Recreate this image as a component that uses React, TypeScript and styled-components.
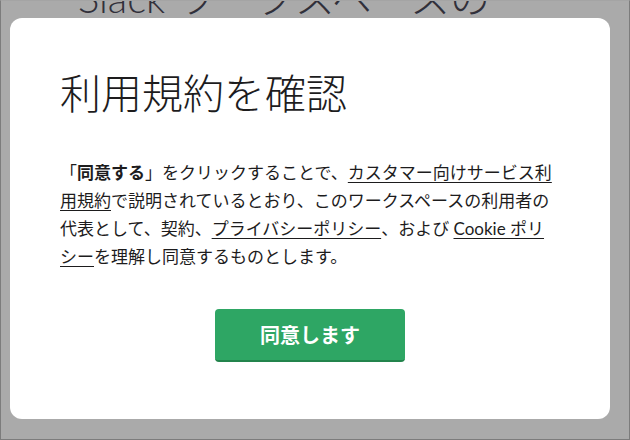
import styled, { createGlobalStyle } from 'styled-components';

const GlobalStyle = createGlobalStyle`
  html, body {
    margin: 0;
    padding: 0;
    width: 630px;
    height: 440px;
    overflow: hidden;
    background: #ffffff;
  }
  * {
    box-sizing: border-box;
  }
`;

const Page = styled.div`
  width: 630px;
  height: 440px;
  overflow: hidden;
  padding: 0 78px;
  font-family: Lato, "Noto Sans CJK JP", sans-serif;
`;

const PageHeading = styled.h1`
  margin: -26px 0 0;
  font-size: 40px;
  font-weight: 300;
  line-height: 1.2;
  color: #4a4858;
  white-space: nowrap;
`;

const Backdrop = styled.div`
  position: fixed;
  inset: 0;
  background: rgba(0, 0, 0, 0.333);
  border: 1px solid #7c7c7c;
  border-top-color: #a4a4a4;
  display: flex;
  justify-content: flex-start;
  align-items: flex-start;
  padding: 17px 0 0 9px;
`;

const Modal = styled.div`
  width: 600px;
  height: 401px;
  background: #ffffff;
  border-radius: 12px;
  padding: 50px 50px 0;
  display: flex;
  flex-direction: column;
  font-family: Lato, "Noto Sans CJK JP", sans-serif;
  color: #1d1c1d;
`;

const Title = styled.h2`
  margin: 0 0 45px;
  font-family: "Noto Sans CJK JP", sans-serif;
  font-size: 41px;
  font-weight: 300;
  line-height: 46px;
  color: #1d1c1d;
`;

const Body = styled.p`
  margin: 0;
  font-size: 17px;
  line-height: 28px;
  color: #1d1c1d;
`;

const Strong = styled.b`
  font-weight: 700;
`;

const Link = styled.a`
  color: inherit;
  text-decoration: underline;
  text-underline-offset: 3px;
  text-decoration-thickness: 1px;
  cursor: pointer;
`;

const Actions = styled.div`
  display: flex;
  justify-content: center;
  margin-top: 38px;
`;

const AgreeButton = styled.button`
  width: 190px;
  height: 53px;
  border: none;
  border-bottom: 2px solid #23844c;
  border-radius: 4px;
  background: #2ea664;
  color: #ffffff;
  font-family: Lato, "Noto Sans CJK JP", sans-serif;
  font-size: 20px;
  font-weight: 700;
  cursor: pointer;
`;

export default function App() {
  return (
    <>
      <GlobalStyle />
      <Page>
        <PageHeading>Slack ワークスペースの</PageHeading>
      </Page>
      <Backdrop>
        <Modal>
          <Title>利用規約を確認</Title>
          <Body>
            「<Strong>同意する</Strong>」をクリックすることで、
            <Link>カスタマー向けサービス利用規約</Link>で説明されているとおり、このワークスペースの利用者の代表として、契約、
            <Link>プライバシーポリシー</Link>、および <Link>Cookie ポリシー</Link>を理解し同意するものとします。
          </Body>
          <Actions>
            <AgreeButton>同意します</AgreeButton>
          </Actions>
        </Modal>
      </Backdrop>
    </>
  );
}
